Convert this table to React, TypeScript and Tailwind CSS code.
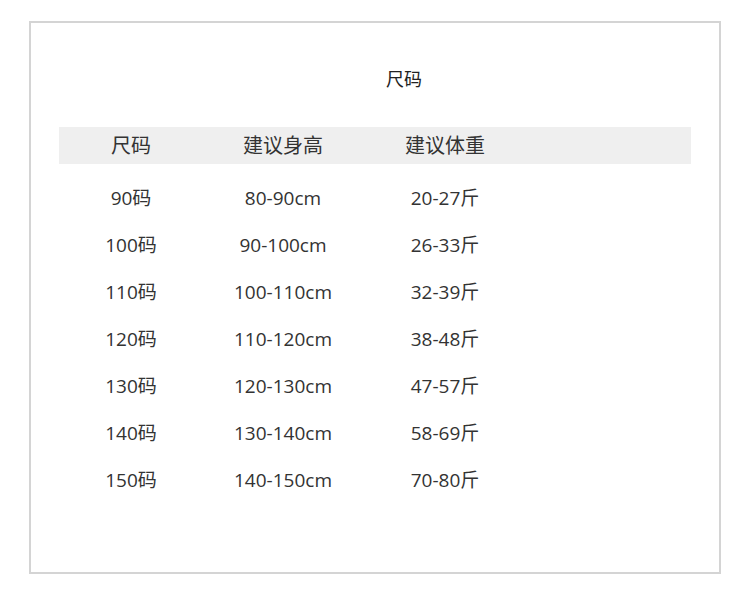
import React from "react";

const rows = [
  ["90码", "80-90cm", "20-27斤"],
  ["100码", "90-100cm", "26-33斤"],
  ["110码", "100-110cm", "32-39斤"],
  ["120码", "110-120cm", "38-48斤"],
  ["130码", "120-130cm", "47-57斤"],
  ["140码", "130-140cm", "58-69斤"],
  ["150码", "140-150cm", "70-80斤"],
];

export default function App() {
  return (
    <div
      className="w-[750px] h-[589px] bg-white pt-[21px] pl-[29px]"
      style={{ fontFamily: '"Open Sans", "Noto Sans CJK SC", sans-serif' }}
    >
      <div className="w-[692px] h-[553px] border-2 border-[#d4d4d4] flex flex-col">
        <div className="h-[104px] pt-[42px] flex justify-center">
          <div className="text-[18px] leading-[28px] text-[#222] pl-[58px]">尺码</div>
        </div>
        <div className="ml-[28px] w-[632px] h-[37px] bg-[#efefef] grid grid-cols-[144px_160px_164px_1fr] items-center text-[20px] text-[#333]">
          <div className="text-center">尺码</div>
          <div className="text-center">建议身高</div>
          <div className="text-center">建议体重</div>
          <div />
        </div>
        <div className="ml-[28px] w-[632px] mt-[11px] flex flex-col">
          {rows.map((r, i) => (
            <div
              key={i}
              className="h-[47px] grid grid-cols-[144px_160px_164px_1fr] items-center text-[19px] text-[#333]"
            >
              <div className="text-center">{r[0]}</div>
              <div className="text-center">{r[1]}</div>
              <div className="text-center">{r[2]}</div>
              <div />
            </div>
          ))}
        </div>
      </div>
    </div>
  );
}
